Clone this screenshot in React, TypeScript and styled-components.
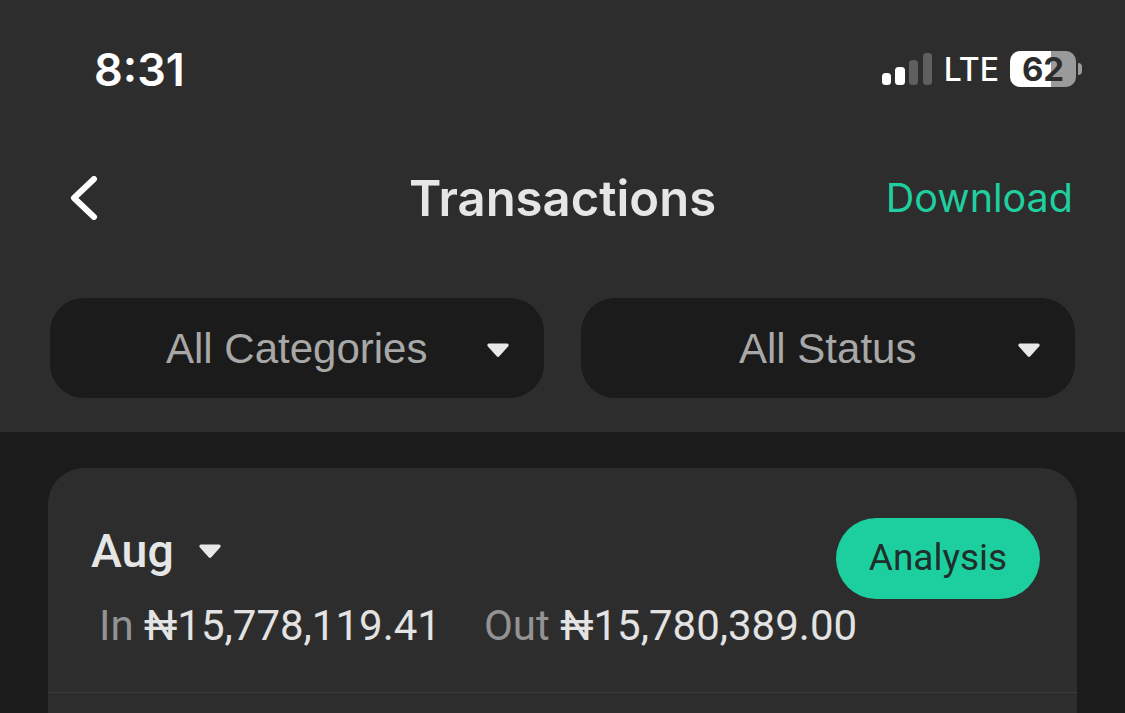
import React, { FC } from "react";
import styled, { createGlobalStyle } from "styled-components";

const GlobalStyle = createGlobalStyle`
  html, body {
    margin: 0;
    padding: 0;
    background: #1b1b1b;
    overflow: hidden;
  }
`;

const Caret: FC<{ className?: string }> = ({ className }) => (
  <svg className={className} width="24" height="16" viewBox="0 0 24 16">
    <path
      d="M3 1.5h18c1.5 0 2.2 1.6 1.3 2.8l-9 10c-.7.8-1.9.8-2.6 0l-9-10C.8 3.1 1.5 1.5 3 1.5z"
      fill="#e8e8e8"
    />
  </svg>
);

const SignalBars = () => (
  <svg width="51" height="32" viewBox="0 0 51 32">
    <rect x="0" y="20" width="9" height="12" rx="3.5" fill="#fff" />
    <rect x="13" y="14" width="10" height="18" rx="3.5" fill="#fff" />
    <rect x="27" y="7" width="9" height="25" rx="3.5" fill="#5f5f5f" />
    <rect x="41" y="0" width="9" height="32" rx="3.5" fill="#5f5f5f" />
  </svg>
);

const App: FC = () => (
  <Page>
    <GlobalStyle />
    <Header>
      <StatusBar>
        <Time>8:31</Time>
        <StatusIcons>
          <SignalBars />
          <Network>LTE</Network>
          <Battery>
            <BatteryBody>
              <BatteryLevel>62</BatteryLevel>
            </BatteryBody>
            <BatteryTip />
          </Battery>
        </StatusIcons>
      </StatusBar>

      <NavBar>
        <BackButton aria-label="Back">
          <svg width="28" height="44" viewBox="0 0 28 44">
            <path
              d="M24 3 L4 22 L24 41"
              fill="none"
              stroke="#fff"
              strokeWidth="6"
              strokeLinecap="round"
              strokeLinejoin="round"
            />
          </svg>
        </BackButton>
        <Title>Transactions</Title>
        <DownloadLink>Download</DownloadLink>
      </NavBar>

      <Filters>
        <FilterButton>
          <FilterLabel $offset={116}>All Categories</FilterLabel>
          <FilterCaret />
        </FilterButton>
        <FilterButton>
          <FilterLabel $offset={158}>All Status</FilterLabel>
          <FilterCaret />
        </FilterButton>
      </Filters>
    </Header>

    <Content>
      <Card>
        <CardTop>
          <Month>
            Aug
            <Caret />
          </Month>
          <AnalysisButton>Analysis</AnalysisButton>
        </CardTop>
        <Totals>
          <Total>
            <TotalLabel>In</TotalLabel> <TotalValue>₦15,778,119.41</TotalValue>
          </Total>
          <Total>
            <TotalLabel>Out</TotalLabel> <TotalValue>₦15,780,389.00</TotalValue>
          </Total>
        </Totals>
        <Divider />
      </Card>
    </Content>
  </Page>
);

const Page = styled.div`
  width: 1125px;
  height: 713px;
  overflow: hidden;
  background: #1b1b1b;
  font-family: Roboto, "Liberation Sans", sans-serif;
`;

const Header = styled.header`
  height: 432px;
  background: #2d2d2d;
  box-sizing: border-box;
  padding-top: 40px;
`;

const StatusBar = styled.div`
  display: flex;
  align-items: center;
  justify-content: space-between;
  height: 58px;
  padding: 0 43px 0 94px;
`;

const Time = styled.span`
  font-family: Inter, sans-serif;
  font-size: 45px;
  font-weight: 600;
  color: #fff;
`;

const StatusIcons = styled.div`
  display: flex;
  align-items: center;
  gap: 11px;
`;

const Network = styled.span`
  font-family: Inter, sans-serif;
  font-size: 32px;
  font-weight: 500;
  color: #fff;
`;

const Battery = styled.div`
  display: flex;
  align-items: center;
  gap: 2px;
`;

const BatteryBody = styled.div`
  width: 66px;
  height: 36px;
  border-radius: 10px;
  background: linear-gradient(90deg, #fff 0 62%, #9a9a9a 62% 100%);
  display: flex;
  align-items: center;
  justify-content: center;
`;

const BatteryLevel = styled.span`
  font-family: Inter, sans-serif;
  font-size: 33px;
  font-weight: 700;
  color: #2d2d2d;
`;

const BatteryTip = styled.div`
  width: 4px;
  height: 12px;
  border-radius: 0 6px 6px 0;
  background: #9a9a9a;
`;

const NavBar = styled.div`
  position: relative;
  display: flex;
  align-items: center;
  justify-content: space-between;
  height: 60px;
  margin-top: 70px;
  padding: 0 52px 0 70px;
`;

const BackButton = styled.button`
  display: flex;
  padding: 0;
  border: none;
  background: none;
`;

const Title = styled.h1`
  position: absolute;
  left: 0;
  right: 0;
  margin: 0;
  text-align: center;
  font-family: Inter, sans-serif;
  font-size: 49px;
  font-weight: 600;
  color: #e6e6e6;
`;

const DownloadLink = styled.a`
  font-family: Inter, sans-serif;
  font-size: 39.5px;
  font-weight: 400;
  color: #1fcf9f;
`;

const Filters = styled.div`
  display: grid;
  grid-template-columns: 494px 494px;
  gap: 37px;
  margin-top: 70px;
  padding-left: 50px;
`;

const FilterButton = styled.button`
  position: relative;
  display: flex;
  align-items: center;
  height: 100px;
  padding: 2px 0 0;
  border: none;
  border-radius: 34px;
  background: #1b1b1b;
`;

const FilterLabel = styled.span<{ $offset: number }>`
  margin-left: ${(p) => p.$offset}px;
  font-family: "Liberation Sans", Arial, sans-serif;
  font-size: 42px;
  color: #a8a8a8;
`;

const FilterCaret = styled(Caret)`
  position: absolute;
  right: 34px;
  top: 44px;
`;

const Content = styled.div`
  padding: 36px 48px 0;
`;

const Card = styled.section`
  height: 300px;
  border-radius: 36px;
  background: #2d2d2d;
`;

const CardTop = styled.div`
  display: flex;
  justify-content: space-between;
  align-items: flex-start;
  height: 131px;
  box-sizing: border-box;
  padding: 50px 37px 0 43px;
`;

const Month = styled.div`
  display: flex;
  align-items: center;
  gap: 24px;
  height: 66px;
  font-size: 46.5px;
  font-weight: 500;
  color: #e6e6e6;
`;

const AnalysisButton = styled.button`
  width: 204px;
  height: 81px;
  padding: 0 0 3px;
  border: none;
  border-radius: 41px;
  background: #1dcf9f;
  font-family: Roboto, sans-serif;
  font-size: 37px;
  color: #1f2f2b;
`;

const Totals = styled.div`
  display: flex;
  gap: 43px;
  height: 52px;
  padding: 0 0 0 51px;
  align-items: center;
`;

const Total = styled.span`
  font-size: 42px;
  white-space: nowrap;
`;

const TotalLabel = styled.span`
  color: #939393;
`;

const TotalValue = styled.span`
  color: #e3e3e3;
`;

const Divider = styled.div`
  height: 1px;
  margin-top: 41px;
  background: #3a3a3a;
`;

export default App;
